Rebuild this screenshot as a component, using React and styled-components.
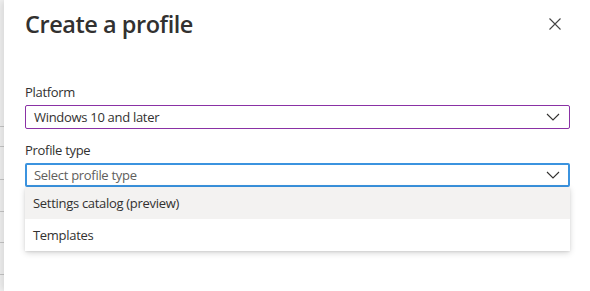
import React from "react";
import styled, { createGlobalStyle } from "styled-components";

const Global = createGlobalStyle`
  html, body { margin: 0; padding: 0; background: #fff; }
  body { font-family: "Open Sans", "Noto Sans", sans-serif; color: #323130; }
`;

const Page = styled.div`
  display: flex;
  width: 590px;
  height: 291px;
  overflow: hidden;
  background: #fafafa;
`;

const Backdrop = styled.div`
  width: 4px;
  flex: none;
  background: #f4f4f4;
  display: flex;
  flex-direction: column;
  padding-top: 126px;
`;

const Rule = styled.div`
  height: 1px;
  background: #c8c8c8;
  margin-bottom: ${(p) => p.gap}px;
`;

const Panel = styled.div`
  flex: 1;
  background: #fff;
  box-shadow: -3px 0 8px rgba(0, 0, 0, 0.12);
  padding: 0 20px 0 21px;
  display: flex;
  flex-direction: column;
`;

const Header = styled.div`
  display: flex;
  align-items: center;
  justify-content: space-between;
  height: 48px;
`;

const Title = styled.h1`
  margin: 0;
  font-size: 23.5px;
  font-weight: 600;
  letter-spacing: -0.45px;
  color: #323130;
`;

const Close = styled.button`
  border: 0;
  background: none;
  padding: 0;
  margin-right: 8px;
  width: 14px;
  height: 14px;
  display: flex;
  align-items: center;
  justify-content: center;
`;

const Field = styled.div`
  display: flex;
  flex-direction: column;
  margin-top: ${(p) => p.top}px;
  position: relative;
`;

const Label = styled.label`
  font-size: 13px;
  line-height: 18px;
  letter-spacing: -0.3px;
  color: #323130;
  margin-bottom: 4px;
`;

const Select = styled.div`
  height: 24px;
  box-sizing: border-box;
  border: ${(p) => (p.focused ? "2px solid #3b93df" : "1px solid #8a31a5")};
  border-radius: 2px;
  display: flex;
  align-items: center;
  justify-content: space-between;
  padding: 0 ${(p) => (p.focused ? 8 : 9)}px 0 ${(p) => (p.focused ? 7 : 8)}px;
  font-size: 13px;
  letter-spacing: -0.3px;
  color: ${(p) => (p.placeholder ? "#605e5c" : "#323130")};
`;

const Menu = styled.div`
  position: absolute;
  left: 0;
  right: 0;
  top: 100%;
  background: #fff;
  border-radius: 0 0 2px 2px;
  box-shadow: 0 2px 6px rgba(0, 0, 0, 0.16), 0 1px 2px rgba(0, 0, 0, 0.08);
`;

const Option = styled.div`
  height: 32px;
  display: flex;
  align-items: center;
  padding-left: 8px;
  font-size: 13px;
  letter-spacing: -0.3px;
  color: #323130;
  background: ${(p) => (p.hover ? "#f3f2f1" : "#fff")};
`;

const Chevron = () => (
  <svg width="14" height="8" viewBox="0 0 14 8">
    <path d="M1 1l6 6 6-6" fill="none" stroke="#323130" strokeWidth="1.1" />
  </svg>
);

const CloseIcon = () => (
  <svg width="12" height="12" viewBox="0 0 12 12">
    <path d="M0.5 0.5l11 11M11.5 0.5l-11 11" stroke="#444" strokeWidth="1.1" />
  </svg>
);

export default function App() {
  return (
    <>
      <Global />
      <Page>
        <Backdrop>
          <Rule gap={19} />
          <Rule gap={32} />
          <Rule gap={31} />
          <Rule gap={30} />
          <Rule gap={31} />
          <Rule gap={0} />
        </Backdrop>
        <Panel>
          <Header>
            <Title>Create a profile</Title>
            <Close aria-label="Close">
              <CloseIcon />
            </Close>
          </Header>
          <Field top={35}>
            <Label>Platform</Label>
            <Select>
              <span>Windows 10 and later</span>
              <Chevron />
            </Select>
          </Field>
          <Field top={12}>
            <Label>Profile type</Label>
            <Select focused placeholder>
              <span>Select profile type</span>
              <Chevron />
            </Select>
            <Menu>
              <Option hover>Settings catalog (preview)</Option>
              <Option>Templates</Option>
            </Menu>
          </Field>
        </Panel>
      </Page>
    </>
  );
}
